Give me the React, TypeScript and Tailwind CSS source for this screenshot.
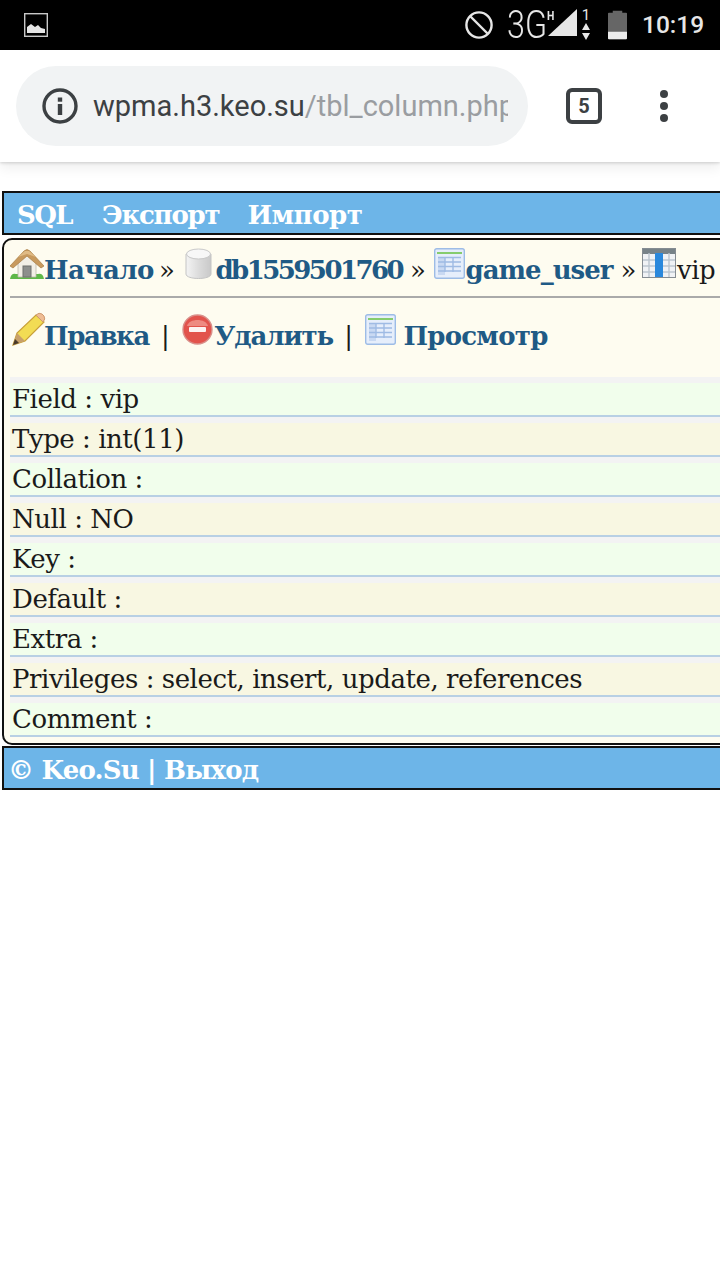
import React from "react";

const Home = () => (
  <svg width="34" height="32" viewBox="0 0 34 32" className="shrink-0 blur-[0.5px]">
    <path d="M0 31q1-6 6-5h22q5-1 6 5z" fill="#5fb848" />
    <path d="M8 14 17 6l9 8v15H8z" fill="#f2efe6" stroke="#bdb8aa" strokeWidth="0.8" />
    <rect x="13" y="18" width="8" height="11" fill="#8d8f8c" stroke="#6e706d" />
    <path d="M0 18 14 3q3-3 6 0l14 15-3 2-14-12L3 20z" fill="#c89a5e" stroke="#a87c44" strokeWidth="0.7" />
    <path d="M8 9 15 3h4l7 6-9-3z" fill="#e0bb85" />
  </svg>
);
const Db = () => (
  <svg width="27" height="32" viewBox="0 0 27 32" className="shrink-0 blur-[0.5px]">
    <defs>
      <linearGradient id="dbg" x1="0" x2="1" y1="0" y2="0">
        <stop offset="0" stopColor="#f4f4f4" />
        <stop offset="0.5" stopColor="#dcdcdc" />
        <stop offset="1" stopColor="#c9c9c9" />
      </linearGradient>
    </defs>
    <path d="M1 6v20c0 6 25 6 25 0V6z" fill="url(#dbg)" stroke="#c4c4c4" />
    <ellipse cx="13.5" cy="6" rx="12" ry="5" fill="#f7f7f7" stroke="#c8c8c8" />
  </svg>
);
const Table = () => (
  <svg width="31" height="31" viewBox="0 0 31 31" className="shrink-0 blur-[0.4px]">
    <rect x="0.7" y="0.7" width="29.6" height="29.6" rx="2" fill="#e6eefb" stroke="#9dbce6" strokeWidth="1.4" />
    <rect x="3" y="4" width="25" height="2" fill="#86cc6e" />
    <rect x="4" y="9" width="7" height="18" fill="#c9d9f2" />
    <path d="M4 9.5h23M4 14h23M4 18.5h23M4 23h23M11 9v15M19 9v15" stroke="#9fbbe4" strokeWidth="1.4" fill="none" />
  </svg>
);
const Column = () => (
  <svg width="34" height="30" viewBox="0 0 34 30" className="shrink-0 blur-[0.4px]">
    <rect x="0.5" y="0.5" width="33" height="29" fill="#f0f2f5" stroke="#858c92" />
    <rect x="1" y="1" width="32" height="5" fill="#778288" />
    <rect x="13" y="5" width="8" height="24" fill="#2a88dc" />
    <path d="M1 12h12M21 12h12M1 18h12M21 18h12M1 24h12M21 24h12M7 5v24M27 5v24" stroke="#bcc6cf" strokeWidth="1.4" fill="none" />
  </svg>
);
const Pencil = () => (
  <svg width="34" height="34" viewBox="0 0 34 34" className="shrink-0 blur-[0.4px]">
    <path d="M1 33 5 21 24 3l8 7-19 19z" fill="#f2dc54" stroke="#c9a03a" strokeWidth="1.2" />
    <path d="M24 3q3-3 6-1l2 2q2 3-1 6z" fill="#efbd94" stroke="#cf9a70" />
    <path d="M1 33 5 21l8 8z" fill="#c8a06a" />
    <path d="M1 33l2-6 4 4z" fill="#4a3a2a" />
  </svg>
);
const Stop = () => (
  <svg width="31" height="31" viewBox="0 0 31 31" className="shrink-0 blur-[0.4px]">
    <circle cx="15.5" cy="15.5" r="14.5" fill="#e2534c" stroke="#d98f8a" strokeWidth="1.4" />
    <path d="M5 12C7 4 24 4 26 12z" fill="#ee8a82" />
    <rect x="7" y="13" width="17" height="5" rx="1" fill="#fdf3f2" />
  </svg>
);

const A = ({ className, children }: { className: string; children: React.ReactNode }) => (
  <span className={`font-bold text-[#1f5a85] ${className}`}>{children}</span>
);

const rows = [
  "Field : vip",
  "Type : int(11)",
  "Collation :",
  "Null : NO",
  "Key :",
  "Default :",
  "Extra :",
  "Privileges : select, insert, update, references",
  "Comment :",
];

export default function App() {
  return (
    <div className="w-[720px] h-[1280px] overflow-hidden bg-white flex flex-col font-['DejaVu_Serif',serif]">
      <div className="h-[50px] shrink-0 bg-black flex items-center text-[#e6e6e6] font-['Roboto',sans-serif]">
        <svg width="24" height="24" viewBox="0 0 24 24" className="ml-6">
          <rect x="0.7" y="0.7" width="22.6" height="22.6" fill="none" stroke="#c8c8c8" strokeWidth="1.4" />
          <path d="M3 20v-6l4-3 4 3 3-2 3 3 4 1v4z" fill="#e6e6e6" />
        </svg>
        <svg width="28" height="28" viewBox="0 0 28 28" className="ml-[417px]">
          <circle cx="14" cy="14" r="12.6" fill="none" stroke="#e6e6e6" strokeWidth="2.4" />
          <path d="M5 5l18 18" stroke="#e6e6e6" strokeWidth="2.4" />
        </svg>
        <span className="ml-[14px] w-[37px] text-[38px] font-light leading-none whitespace-nowrap origin-left scale-x-[0.85]">3G</span>
        <div className="relative w-[37px] h-[30px]">
          <span className="absolute left-[2px] top-[-1px] text-[13px] font-bold leading-none scale-x-[0.8]">H</span>
          <svg width="29" height="27" viewBox="0 0 29 27" className="absolute left-[4px] top-[-1px]">
            <path d="M0 27 29 0v27z" fill="#e6e6e6" />
          </svg>
        </div>
        <div className="w-[10px] h-[34px] flex flex-col items-center">
          <span className="text-[15px] leading-[15px]">1</span>
          <svg width="10" height="19" viewBox="0 0 10 19">
            <path d="M5 0l4 7H1zM1 10h8l-4 7z" fill="#e6e6e6" />
          </svg>
        </div>
        <svg width="19" height="30" viewBox="0 0 20 30" className="ml-[17px]">
          <path d="M5 0h10v2h4q1 0 1 1v26q0 1-1 1H1q-1 0-1-1V3q0-1 1-1h4z" fill="#666" />
          <path d="M0 22h20v7q0 1-1 1H1q-1 0-1-1z" fill="#ececec" />
        </svg>
        <span className="ml-[15px] text-[24.5px] font-medium leading-none">10:19</span>
      </div>

      <div className="h-[112px] shrink-0 bg-white flex items-center relative z-10 shadow-[0_1px_3px_rgba(0,0,0,0.16),0_6px_12px_rgba(0,0,0,0.07)] font-['Roboto',sans-serif]">
        <div className="ml-4 w-[512px] h-[80px] rounded-[40px] bg-[#f1f3f4] flex items-center overflow-hidden">
          <svg width="36" height="36" viewBox="0 0 36 36" className="ml-[26px] shrink-0">
            <circle cx="18" cy="18" r="16" fill="none" stroke="#3c4043" strokeWidth="3.4" />
            <rect x="15.8" y="16" width="4.4" height="11" fill="#3c4043" />
            <rect x="15.8" y="9.5" width="4.4" height="4.2" fill="#3c4043" />
          </svg>
          <div className="ml-[15px] w-[415px] overflow-hidden whitespace-nowrap text-[29px] leading-[34px]">
            <span className="text-[#3c4043]">wpma.h3.keo.su</span>
            <span className="text-[#9a9da1]">/tbl_column.php</span>
          </div>
        </div>
        <div className="ml-[38px] w-9 h-9 rounded-[6px] border-4 border-[#3c4043] flex items-center justify-center text-[#3c4043] text-[20px] font-bold leading-none">5</div>
        <div className="ml-[58px] flex flex-col gap-[4px]">
          <div className="w-2 h-2 rounded-full bg-[#3c4043]" />
          <div className="w-2 h-2 rounded-full bg-[#3c4043]" />
          <div className="w-2 h-2 rounded-full bg-[#3c4043]" />
        </div>
      </div>

      <div className="pt-[29px] pl-[2px] w-[800px] text-[26px] leading-[40px]">
        <div className="h-[44px] bg-[#6db5e8] border-2 border-[#111] flex items-center pl-[13px] pt-[3px] font-bold text-white">
          <span className="tracking-[-1.6px]">SQL</span>
          <span className="ml-[30px] tracking-[-1.2px]">Экспорт</span>
          <span className="ml-[28px] tracking-[-0.5px]">Импорт</span>
        </div>

        <div className="mt-[3px] bg-[#fefcf0] border-2 border-[#111] rounded-l-[10px] text-[#1a1a1a] pl-[6px] tracking-[-0.45px]">
          <div className="h-[58px] flex items-start whitespace-nowrap pt-[8px] border-b-2 border-[#aaa]">
            <Home />
            <div className="mt-[2px]"><A className="tracking-[-0.5px]">Начало</A></div>
            <span className="mt-[2px] ml-[5px]">»</span>
            <span className="ml-[11px]"><Db /></span>
            <div className="mt-[2px] ml-[3px]"><A className="tracking-[-2.55px]">db1559501760</A></div>
            <span className="mt-[2px] ml-[8px]">»</span>
            <span className="ml-[8px]"><Table /></span>
            <div className="mt-[2px] ml-[1px]"><A className="tracking-[-1px]">game_user</A></div>
            <span className="mt-[2px] ml-[8px]">»</span>
            <span className="ml-[6px]"><Column /></span>
            <span className="mt-[2px] ml-[1px]">vip</span>
          </div>
          <div className="h-[79px] flex items-start whitespace-nowrap pt-[14px]">
            <span className="ml-[2px]"><Pencil /></span>
            <div className="mt-[4px] ml-[-2px]"><A className="tracking-[-1.4px]">Правка</A></div>
            <span className="mt-[4px] ml-[12px]">|</span>
            <span className="mt-[2px] ml-[13px]"><Stop /></span>
            <div className="mt-[4px] ml-[1px]"><A className="tracking-[-1.1px]">Удалить</A></div>
            <span className="mt-[4px] ml-[11px]">|</span>
            <span className="mt-[2px] ml-[13px]"><Table /></span>
            <div className="mt-[4px] ml-[7px]"><A className="tracking-[-0.75px]">Просмотр</A></div>
          </div>
          <div className="flex flex-col">
            {rows.map((r, i) => (
              <div key={r} className="bg-[#f3f3f3] pt-[6px]">
                <div className={`h-[34px] border-b-2 border-[#b8d0e4] pl-[2px] leading-[32px] whitespace-nowrap ${i % 2 ? "bg-[#f8f7e2]" : "bg-[#f1feec]"}`}>
                  {r}
                </div>
              </div>
            ))}
          </div>
          <div className="h-[6px]" />
        </div>

        <div className="mt-[1px] h-[44px] bg-[#6db5e8] border-2 border-[#111] flex items-center pl-[4px] pt-[3px] font-bold text-white whitespace-nowrap tracking-[-0.8px]">
          © Keo.Su | Выход
        </div>
      </div>
    </div>
  );
}
